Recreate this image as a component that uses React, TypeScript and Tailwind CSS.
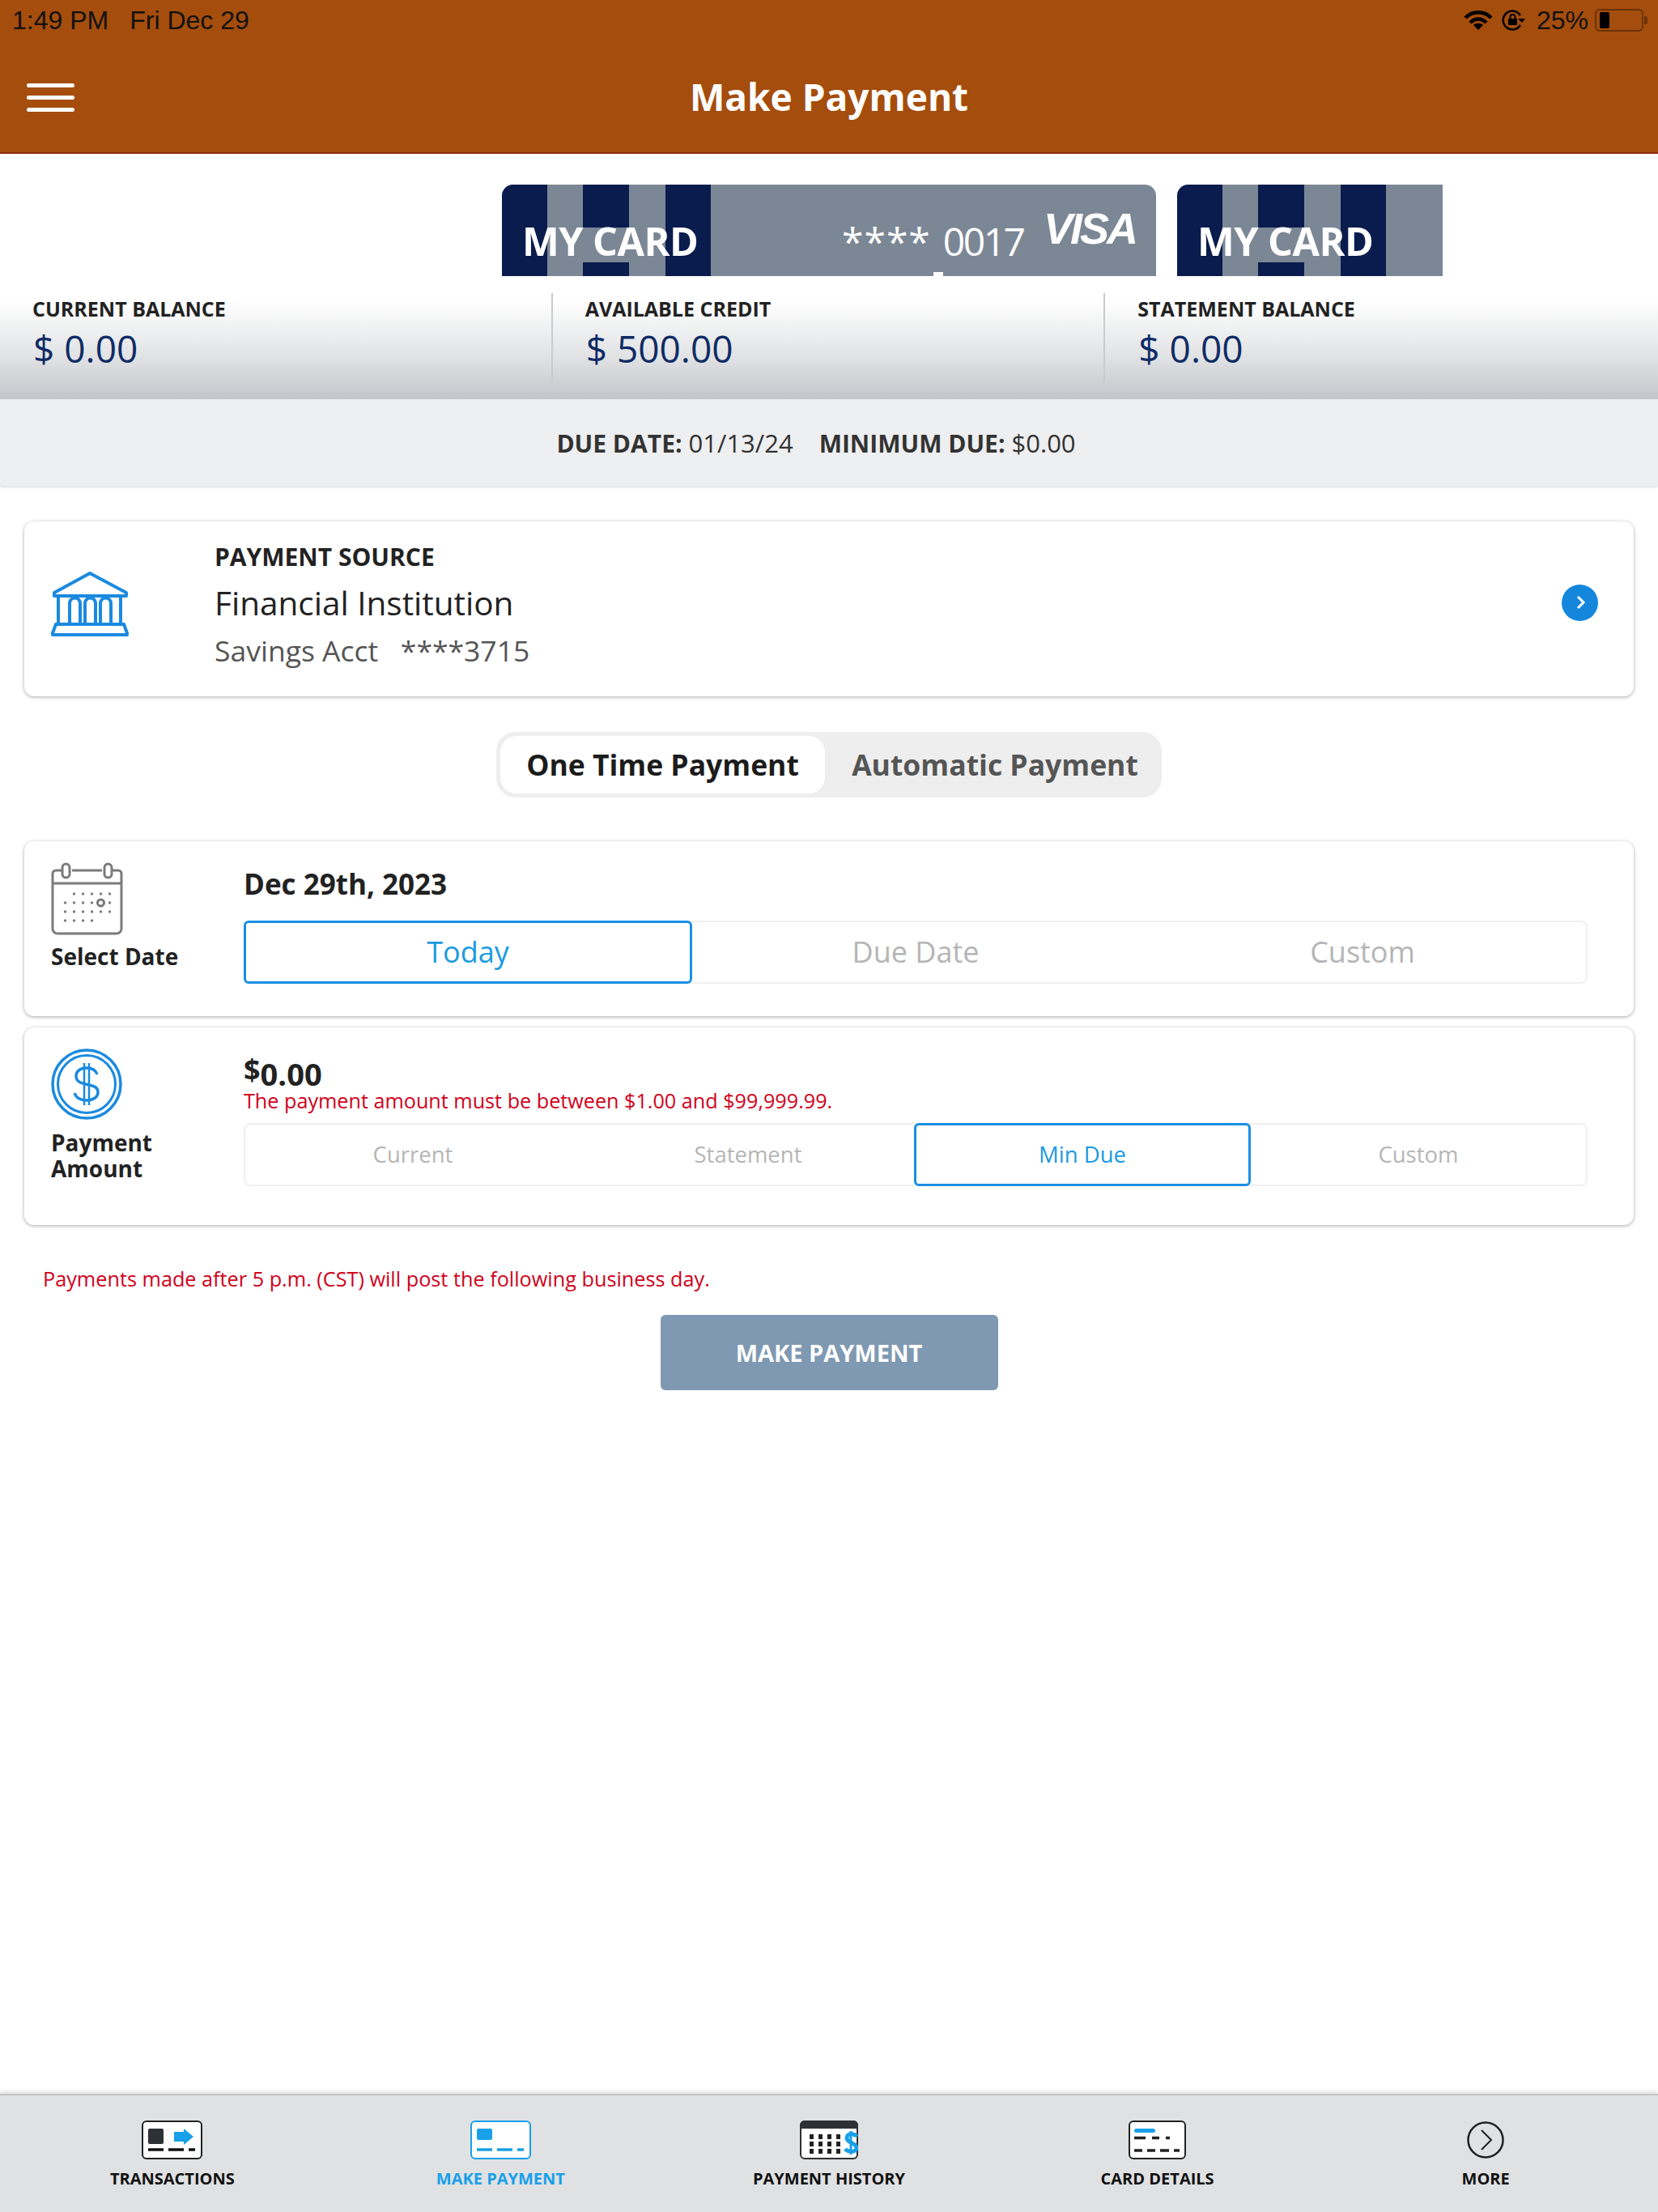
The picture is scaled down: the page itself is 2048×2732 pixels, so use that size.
import { ReactNode } from 'react'

function CardFace({ wide }: { wide?: boolean }) {
  return (
    <div className={`relative h-[113px] overflow-hidden rounded-tl-[14px] bg-[#7c8795] ${wide ? 'w-[808px] rounded-tr-[14px]' : 'w-[328px]'}`}>
      <div className="absolute inset-0 flex">
        <div className="w-[56px] bg-[#0a1c4d]" />
        <div className="w-[44px]" />
        <div className="flex w-[57px] flex-col bg-[#0a1c4d]">
          <div className="mt-[53px] h-[43px] bg-[#7c8795]" />
        </div>
        <div className="w-[45px]" />
        <div className="w-[56px] bg-[#0a1c4d]" />
      </div>
      <div className="relative flex h-full items-end pb-[14px] pl-[25px] text-[48.5px] leading-[60px] font-bold text-white">
        <span className="tracking-[-0.5px]">MY CARD</span>
        {wide && (
          <>
            <span className="absolute top-[40px] left-[420px] text-[48px] leading-[60px] font-normal">
              <span className="tracking-[1px]">****</span>
              <span className="ml-[15px] tracking-[-2.5px]">0017</span>
            </span>
            <span className="absolute top-[24px] left-[669px] font-['Liberation_Sans',sans-serif] text-[54px] leading-[60px] font-bold tracking-[-3px] italic">VISA</span>
            <span className="absolute bottom-0 left-[533px] h-[5px] w-[12px] bg-white" />
          </>
        )}
      </div>
    </div>
  )
}

function Balance({ label, value, last }: { label: string; value: string; last?: boolean }) {
  return (
    <div className={`mt-[17px] h-[112px] pt-[2px] pl-[41px] ${last ? '' : 'border-r-2 border-[#c9cbce]'}`}>
      <div className="-ml-[1px] text-[25px] leading-[34px] font-bold text-[#222]">{label}</div>
      <div className="mt-[1px] text-[46px] leading-[62px] text-[#0f2c66]">{value}</div>
    </div>
  )
}

function Panel({ className, children }: { className: string; children: ReactNode }) {
  return <div className={`rounded-[12px] bg-white shadow-[0_1px_4px_rgba(0,0,0,0.35)] ${className}`}>{children}</div>
}

function Segments({ items, active, cols, text }: { items: string[]; active: number; cols: string; text: string }) {
  return (
    <div className={`grid h-[78px] rounded-[8px] border-2 border-[#f0f0f0] ${cols} ${text}`}>
      {items.map((item, i) => (
        <div
          key={item}
          className={
            i === active
              ? '-my-[2px] -ml-[2px] flex items-center justify-center rounded-[6px] border-[3px] border-[#1a8fe3] bg-white text-[#1a9be0]'
              : 'flex items-center justify-center text-[#b5b5b5]'
          }
        >
          {item}
        </div>
      ))}
    </div>
  )
}

function BankIcon() {
  return (
    <svg width="96" height="80" viewBox="0 0 96 80" fill="none" stroke="#1a8ae0" strokeWidth="4" strokeLinejoin="round" strokeLinecap="round">
      <path d="M48 2 L93 26 L93 30 L4 30 L4 26 Z" />
      <path d="M9 30 V64 M86 30 V64" />
      <path d="M23 63 V39 a6.5 6.5 0 0 1 13 0 V63 M42 63 V39 a6.5 6.5 0 0 1 13 0 V63 M61 63 V39 a6.5 6.5 0 0 1 13 0 V63" />
      <path d="M6 65 H90 L94 76 V78 H2 V76 Z" />
    </svg>
  )
}

function CalendarIcon() {
  const rows = [
    [28, 39, 50, 61, 72],
    [17, 28, 39, 50, 72],
    [17, 28, 39, 50, 61, 72],
    [17, 28, 39, 50],
  ]
  return (
    <svg width="89" height="90" viewBox="0 0 89 90" fill="none" stroke="#7b7b7b" strokeWidth="3">
      <path d="M14 10 H6 a4 4 0 0 0 -4 4 V82 a6 6 0 0 0 6 6 H81 a6 6 0 0 0 6 -6 V14 a4 4 0 0 0 -4 -4 H75 M26 10 H63" />
      <path d="M2 26 H87" />
      <rect x="14" y="2" width="9" height="17" rx="4.5" />
      <rect x="66" y="2" width="9" height="17" rx="4.5" />
      {rows.map((row, y) =>
        row.map(x => <circle key={`${x}-${y}`} cx={x + 0.5} cy={39 + y * 11} r="1.7" fill="#7b7b7b" stroke="none" />),
      )}
      <circle cx="61.5" cy="50" r="4" />
    </svg>
  )
}

function DollarIcon() {
  return (
    <svg width="88" height="88" viewBox="0 0 88 88" fill="none" stroke="#1a8ae0">
      <circle cx="44" cy="44" r="42" strokeWidth="3.5" />
      <circle cx="44" cy="44" r="35.5" strokeWidth="3" />
      <path d="M57 32 C55 26 49 24 44 24 C36 24 31 28 31 34 C31 49 58 40 58 54 C58 60 52 64 44 64 C37 64 31 61 29 55" strokeWidth="3.5" />
      <path d="M41 18 V70 M47 18 V70" strokeWidth="2.5" />
    </svg>
  )
}

function TransactionsIcon() {
  return (
    <svg width="75" height="48" viewBox="0 0 75 48" className="block">
      <rect x="1" y="1" width="73" height="46" rx="5" fill="#fff" stroke="#222" strokeWidth="2" />
      <rect x="8" y="10" width="19" height="19" rx="2" fill="#2d3034" />
      <path d="M40 14 H52 V10 L64 20 L52 30 V26 H40 Z" fill="#18a0e8" />
      <path d="M8 36 H27 M33 36 H52 M58 36 H66" stroke="#111" strokeWidth="3.5" />
    </svg>
  )
}

function MakePaymentIcon() {
  return (
    <svg width="75" height="48" viewBox="0 0 75 48" className="block">
      <rect x="1" y="1" width="73" height="46" rx="5" fill="#fff" stroke="#18a0e8" strokeWidth="2" />
      <rect x="8" y="10" width="19" height="14" rx="2" fill="#18a0e8" />
      <path d="M8 36 H27 M33 36 H52 M58 36 H66" stroke="#18a0e8" strokeWidth="3.5" />
    </svg>
  )
}

function PaymentHistoryIcon() {
  const xs = [12, 23, 34, 45]
  const ys = [17, 26, 35]
  return (
    <svg width="72" height="48" viewBox="0 0 72 48" className="block">
      <path d="M1 6 a5 5 0 0 1 5 -5 H66 a5 5 0 0 1 5 5 V42 a5 5 0 0 1 -5 5 H6 a5 5 0 0 1 -5 -5 Z" fill="#fff" stroke="#2d3034" strokeWidth="2" />
      <path d="M0 6 a6 6 0 0 1 6 -6 H66 a6 6 0 0 1 6 6 V10 H0 Z" fill="#2d3034" />
      {ys.map(y => xs.map(x => <rect key={`${x}-${y}`} x={x} y={y} width="5" height="6" fill="#222" />))}
      <path d="M70 20 C68 16 58 15 58 21.5 C58 28 70 27 70 34 C70 40 59 39 56 35" fill="none" stroke="#18a0e8" strokeWidth="5" />
      <path d="M63 13 V42" stroke="#18a0e8" strokeWidth="3" />
    </svg>
  )
}

function CardDetailsIcon() {
  return (
    <svg width="71" height="48" viewBox="0 0 71 48" className="block">
      <rect x="1" y="1" width="69" height="46" rx="5" fill="#fff" stroke="#222" strokeWidth="2" />
      <rect x="7" y="10" width="26" height="5" rx="2.5" fill="#18a0e8" />
      <path d="M7 21.5 H21 M29 21.5 H38 M46 21.5 H51 M7 37 H17 M23 37 H33 M39 37 H50 M56 37 H63" stroke="#222" strokeWidth="3.5" />
    </svg>
  )
}

function MoreIcon() {
  return (
    <svg width="46" height="48" viewBox="0 0 46 48" fill="none" stroke="#222" className="block">
      <circle cx="23" cy="24" r="21.5" strokeWidth="2.5" />
      <path d="M18 12 L30 24 L18 36" strokeWidth="2" />
    </svg>
  )
}

const tabs = [
  { label: 'TRANSACTIONS', icon: <TransactionsIcon /> },
  { label: 'MAKE PAYMENT', icon: <MakePaymentIcon />, active: true },
  { label: 'PAYMENT HISTORY', icon: <PaymentHistoryIcon /> },
  { label: 'CARD DETAILS', icon: <CardDetailsIcon /> },
  { label: 'MORE', icon: <MoreIcon /> },
]

export default function App() {
  return (
    <div className="flex h-[2732px] w-[2048px] flex-col overflow-hidden bg-white font-['Open_Sans',sans-serif]">
      <header className="flex h-[190px] flex-col border-b-2 border-[#8f2a12] bg-[#a54d0d]">
        <div className="flex h-[50px] items-center justify-between pr-[13px] pl-[15px] font-['Liberation_Sans',sans-serif] text-[32px] text-[#111]">
          <div className="flex gap-[26px]">
            <span>1:49 PM</span>
            <span>Fri Dec 29</span>
          </div>
          <div className="flex items-center">
            <svg width="36" height="26" viewBox="0 0 36 26" fill="none" stroke="#000" strokeWidth="4.5">
              <path d="M2 10 C11 1 25 1 34 10" />
              <path d="M8 16 C14 10 22 10 28 16" />
              <path d="M18 25 L12 19 C15 16 21 16 24 19 Z" fill="#000" stroke="none" />
            </svg>
            <svg width="30" height="28" viewBox="0 0 30 28" fill="none" stroke="#000" strokeWidth="2.5" className="ml-[10px]">
              <path d="M24 20 A11.5 11.5 0 1 1 24 8" />
              <path d="M21 12 L26 17 L30 12 Z" fill="#000" stroke="none" />
              <rect x="9" y="12" width="11" height="8" rx="1" fill="#000" stroke="none" />
              <path d="M11.5 12 V10 a3 3 0 0 1 6 0 V12" strokeWidth="2" />
            </svg>
            <span className="ml-[14px]">25%</span>
            <div className="ml-[8px] flex h-[28px] w-[60px] items-center rounded-[6px] border-2 border-[#6b3208] pl-[4px]">
              <div className="h-[20px] w-[12px] rounded-[2px] bg-black" />
            </div>
            <div className="ml-[1px] h-[10px] w-[4px] rounded-r-[3px] bg-[#6b3208]" />
          </div>
        </div>
        <div className="grid flex-1 grid-cols-[1fr_auto_1fr] items-center">
          <div className="flex w-[59px] translate-x-[33px] translate-y-[1px] flex-col gap-[10px]">
            <div className="h-[5px] rounded-full bg-white" />
            <div className="h-[5px] rounded-full bg-white" />
            <div className="h-[5px] rounded-full bg-white" />
          </div>
          <h1 className="text-[46px] leading-[60px] font-bold text-white">Make Payment</h1>
          <div />
        </div>
      </header>

      <div className="flex gap-[26px] pt-[38px] pl-[620px]">
        <CardFace wide />
        <CardFace />
      </div>

      <div className="mt-[4px] grid h-[148px] grid-cols-3 bg-linear-to-b from-white from-[18%] via-[#e1e2e4] via-[65%] to-[#c2c6ca]">
        <Balance label="CURRENT BALANCE" value="$ 0.00" />
        <Balance label="AVAILABLE CREDIT" value="$ 500.00" />
        <Balance label="STATEMENT BALANCE" value="$ 0.00" last />
      </div>

      <div className="flex h-[108px] items-center justify-center gap-[32px] rounded-b-[4px] bg-[#eeeff1] pr-[32px] text-[31px] text-[#333] shadow-[0_1px_2px_rgba(0,0,0,0.15)]">
        <div>
          <span className="text-[30px] font-bold">DUE DATE:</span> 01/13/24
        </div>
        <div>
          <span className="text-[30px] font-bold">MINIMUM DUE:</span> $0.00
        </div>
      </div>

      <main className="flex flex-1 flex-col px-[30px] pt-[43px]">
        <Panel className="flex h-[216px] items-center pr-[44px] pb-[8px]">
          <div className="mb-[4px] w-[235px] pl-[33px]">
            <BankIcon />
          </div>
          <div className="flex-1">
            <div className="text-[30px] leading-[40px] font-bold text-[#222]">PAYMENT SOURCE</div>
            <div className="mt-[8px] text-[40.5px] leading-[58px] text-[#222]">Financial Institution</div>
            <div className="mt-[4px] text-[35.5px] leading-[50px] whitespace-pre text-[#555]">Savings Acct   ****3715</div>
          </div>
          <div className="mb-[8px] flex h-[45px] w-[45px] items-center justify-center rounded-full bg-[#1487dd]">
            <svg width="16" height="22" viewBox="0 0 16 22" fill="none" stroke="#fff" strokeWidth="3">
              <path d="M5 4 L12 11 L5 18" />
            </svg>
          </div>
        </Panel>

        <div className="mt-[44px] flex justify-center">
          <div className="flex h-[81px] w-[822px] items-center rounded-[24px] bg-[#eeeeee] pl-[5px] text-[35.5px] font-bold">
            <div className="flex h-[71px] w-[401px] items-center justify-center rounded-[20px] bg-white text-[#1c1c1c]">One Time Payment</div>
            <div className="flex-1 pl-[4px] text-center text-[#555]">Automatic Payment</div>
          </div>
        </div>

        <Panel className="mt-[54px] flex h-[216px]">
          <div className="w-[271px] pt-[26px] pl-[33px]">
            <CalendarIcon />
            <div className="mt-[8px] text-[28px] leading-[36px] font-bold text-[#222]">Select Date</div>
          </div>
          <div className="flex-1 pr-[57px]">
            <div className="mt-[30px] mb-[22px] text-[35px] leading-[46px] font-bold text-[#222]">Dec 29th, 2023</div>
            <Segments items={['Today', 'Due Date', 'Custom']} active={0} cols="grid-cols-3" text="text-[36px]" />
          </div>
        </Panel>

        <Panel className="mt-[14px] flex h-[244px]">
          <div className="w-[271px] pt-[26px] pl-[33px]">
            <DollarIcon />
            <div className="mt-[12px] text-[28px] leading-[32px] font-bold text-[#222]">
              Payment
              <br />
              Amount
            </div>
          </div>
          <div className="flex-1 pr-[57px]">
            <div className="mt-[36px] flex h-[43px] items-end text-[38px] leading-[43px] font-bold text-[#222]">
              <span className="mb-[10px] text-[36px] leading-[34px]">$</span>
              <span>0.00</span>
            </div>
            <div className="text-[25.2px] leading-[22px] text-[#d0021b]">The payment amount must be between $1.00 and $99,999.99.</div>
            <div className="mt-[17px]">
              <Segments items={['Current', 'Statement', 'Min Due', 'Custom']} active={2} cols="grid-cols-4" text="text-[27.5px]" />
            </div>
          </div>
        </Panel>

        <div className="mt-[48px] pl-[23px] text-[25.25px] leading-[36px] text-[#d0021b]">Payments made after 5 p.m. (CST) will post the following business day.</div>

        <div className="mt-[27px] flex justify-center">
          <div className="flex h-[93px] w-[417px] items-center justify-center rounded-[6px] bg-[#7f99b2] text-[29px] font-bold text-white">MAKE PAYMENT</div>
        </div>
      </main>

      <nav className="grid h-[146px] grid-cols-5 border-t-2 border-[#c4c4c4] bg-[#e0e1e3] px-[10px] pt-[31px] shadow-[0_-3px_5px_rgba(0,0,0,0.12)]">
        {tabs.map(tab => (
          <div key={tab.label} className="flex flex-col items-center">
            <div className="flex h-[48px] items-center">{tab.icon}</div>
            <div className={`mt-[10px] text-[20px] leading-[28px] font-bold ${tab.active ? 'text-[#18a0e8]' : 'text-[#111]'}`}>{tab.label}</div>
          </div>
        ))}
      </nav>
    </div>
  )
}
